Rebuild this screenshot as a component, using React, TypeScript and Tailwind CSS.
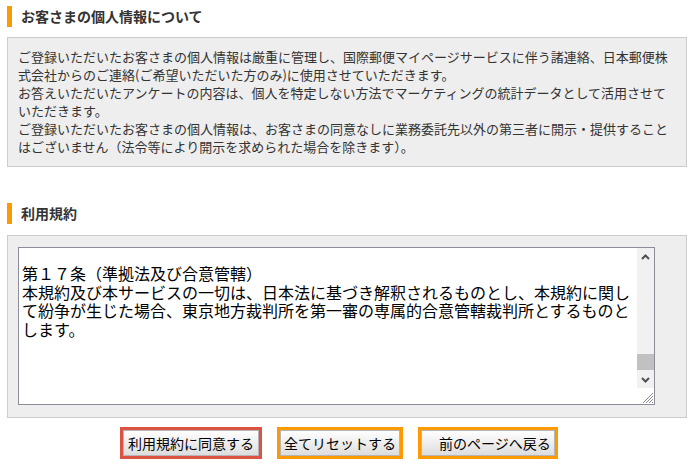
import React from "react"

const FONT = { fontFamily: '"Noto Sans CJK JP", "Noto Sans", sans-serif' }

function SectionTitle({ children }: { children: React.ReactNode }) {
  return (
    <h2 className="h-[21px] border-l-[5px] border-[#ff9900] pl-[9px] text-[14px] font-bold leading-[21px] text-[#333]">
      {children}
    </h2>
  )
}

function Chevron({ up }: { up?: boolean }) {
  return (
    <svg width="9" height="6" viewBox="0 0 9 6">
      <polyline
        points={up ? "1,5 4.5,1.5 8,5" : "1,1 4.5,4.5 8,1"}
        fill="none"
        stroke="#505050"
        strokeWidth="2"
      />
    </svg>
  )
}

function FakeScrollbar() {
  return (
    <div className="flex w-[17px] flex-col bg-[#f1f1f1]">
      <div className="flex h-[17px] items-center justify-center">
        <Chevron up />
      </div>
      <div className="flex flex-1 flex-col justify-end pb-[1px]">
        <div className="h-[16px] bg-[#c1c1c1]" />
      </div>
      <div className="flex h-[17px] items-center justify-center">
        <Chevron />
      </div>
      <div className="flex h-[16px] items-end justify-end bg-white">
        <svg width="14" height="14" viewBox="0 0 14 14">
          <g stroke="#8a8a8a" strokeWidth="1">
            <line x1="3" y1="13" x2="13" y2="3" />
            <line x1="6" y1="13" x2="13" y2="6" />
            <line x1="9" y1="13" x2="13" y2="9" />
            <line x1="12" y1="13" x2="13" y2="12" />
          </g>
        </svg>
      </div>
    </div>
  )
}

function FormButton({
  label,
  frame,
  pad = "px-[3px]",
}: {
  label: string
  frame: string
  pad?: string
}) {
  return (
    <span className={`inline-flex border-[3px] ${frame}`}>
      <button
        type="button"
        className={`h-[26px] border border-[#b5b5b5] bg-gradient-to-b from-white to-[#dddddd] ${pad} text-[14px] leading-[24px] text-black`}
      >
        {label}
      </button>
    </span>
  )
}

export default function App() {
  return (
    <div className="min-h-[469px] w-[698px] bg-white pt-[6px]" style={FONT}>
      <div className="ml-[7px] w-[680px]">
        <SectionTitle>お客さまの個人情報について</SectionTitle>
        <div className="mt-[10px] border border-[#cccccc] bg-[#eeeeee] px-[10px] py-[10px] text-[13px] leading-[18px] text-[#333]">
          ご登録いただいたお客さまの個人情報は厳重に管理し、国際郵便マイページサービスに伴う諸連絡、日本郵便株式会社からのご連絡(ご希望いただいた方のみ)に使用させていただきます。
          <br />
          お答えいただいたアンケートの内容は、個人を特定しない方法でマーケティングの統計データとして活用させていただきます。
          <br />
          ご登録いただいたお客さまの個人情報は、お客さまの同意なしに業務委託先以外の第三者に開示・提供することはございません（法令等により開示を求められた場合を除きます）。
        </div>

        <div className="mt-[36px]">
          <SectionTitle>利用規約</SectionTitle>
        </div>
        <div className="mt-[11px] border border-[#cccccc] bg-[#eeeeee] pb-[12px] pl-[10px] pt-[11px]">
          <div className="flex h-[158px] w-[637px] border border-[#8c8c9a] bg-white">
            <div className="flex-1 overflow-hidden pl-[3px] pr-[2px] pt-[16px] text-[16px] leading-[18.6px] text-black">
              第１７条（準拠法及び合意管轄）
              <br />
              本規約及び本サービスの一切は、日本法に基づき解釈されるものとし、本規約に関して紛争が生じた場合、東京地方裁判所を第一審の専属的合意管轄裁判所とするものとします。
            </div>
            <FakeScrollbar />
          </div>
        </div>
      </div>

      <div className="mt-[9px] flex gap-[15px] pl-[120px]">
        <FormButton label="利用規約に同意する" frame="border-[#db5443]" pad="px-[4px]" />
        <FormButton label="全てリセットする" frame="border-[#ff9900]" />
        <FormButton label="　前のページへ戻る" frame="border-[#ff9900]" />
      </div>
    </div>
  )
}
